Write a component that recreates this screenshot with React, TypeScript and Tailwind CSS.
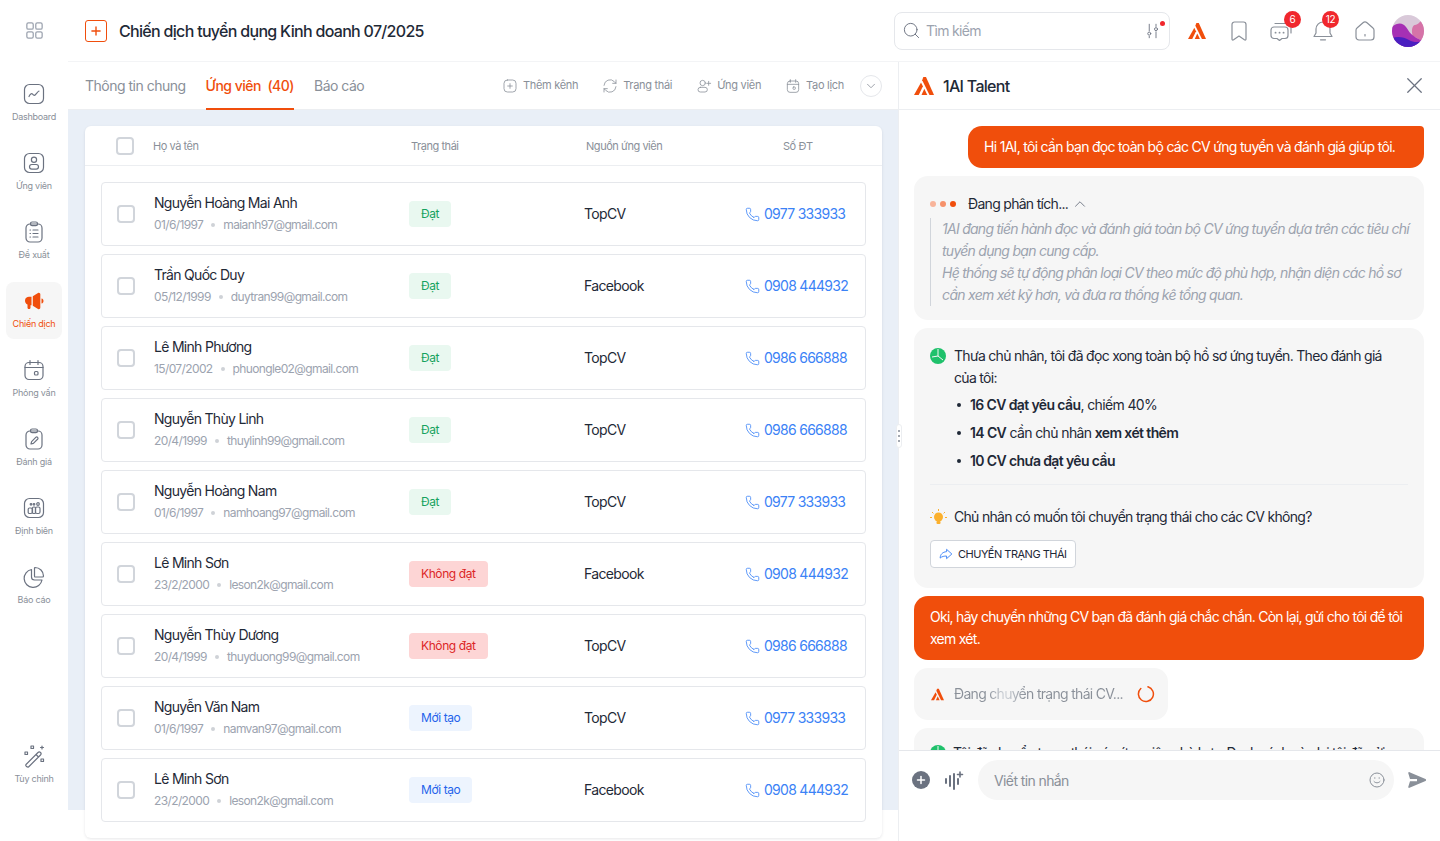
import { ChevronDown, ChevronUp, Phone, Plus, Search, X } from "lucide-react";
import type { ReactNode } from "react";

const font = { fontFamily: "Inter, 'Noto Sans', sans-serif" };

const Logo = ({ className }: { className: string }) => (
  <svg className={className} viewBox="0 0 20 20" fill="#f04e0c">
    <path d="M9.300 1h2.700l8 18h-4.500L8.200 4.300z" />
    <path d="M7 6.500 8.900 10.200 4.700 19H0z" />
    <path d="M10.300 12.800 13.300 19H7.500z" />
  </svg>
);

const Icon = ({ children, className = "h-6 w-6" }: { children: ReactNode; className?: string }) => (
  <svg className={className} viewBox="0 0 24 24" fill="none" stroke="currentColor" strokeWidth="1.2" strokeLinecap="round" strokeLinejoin="round">
    {children}
  </svg>
);

const navItems: { label: string; active?: boolean; icon: ReactNode }[] = [
  {
    label: "Dashboard",
    icon: (
      <>
        <rect x="2.500" y="2.500" width="19" height="19" rx="5" />
        <path d="M7 14.500c1.200-2.500 2.500-3.600 3.600-2.400s1.700 1.800 3 .4 2.400-3.300 3.400-3.500" />
      </>
    ),
  },
  {
    label: "Ứng viên",
    icon: (
      <>
        <rect x="2.500" y="2.500" width="19" height="19" rx="5" />
        <circle cx="12" cy="8.800" r="2.600" />
        <rect x="7.500" y="13.500" width="9" height="4.600" rx="2.300" />
      </>
    ),
  },
  {
    label: "Đề xuất",
    icon: (
      <>
        <rect x="4" y="4" width="16" height="18" rx="4" />
        <rect x="8.500" y="2" width="7" height="3.600" rx="1.600" />
        <path d="M8 10h.5M11 10h5M8 13.500h.5M11 13.500h5M8 17h.5M11 17h5" />
      </>
    ),
  },
  {
    label: "Chiến dịch",
    active: true,
    icon: (
      <>
        <path d="M3 11.500C3 9 5 7.800 7 7.800h2.500v8.400h-1v2.600c0 1.600-3 1.600-3 0v-3.200C4 15 3 13.500 3 11.500z" fill="#f04e0c" stroke="none" />
        <path d="M10.800 7.300 16 4c1.200-.6 2.300.2 2.300 1.500v13c0 1.300-1.100 2.100-2.300 1.500l-5.200-3.300z" fill="#f04e0c" stroke="none" />
        <path d="M19.500 9.500c1.500.3 2 1.400 2 2.500s-.5 2.200-2 2.500z" fill="#f04e0c" stroke="none" />
      </>
    ),
  },
  {
    label: "Phỏng vấn",
    icon: (
      <>
        <rect x="3" y="4.500" width="18" height="17" rx="4" />
        <path d="M3 9.500h18M8 2.500v4M16 2.500v4" />
        <rect x="12.500" y="13.500" width="3.500" height="3.500" rx="1" />
      </>
    ),
  },
  {
    label: "Đánh giá",
    icon: (
      <>
        <rect x="4" y="4" width="16" height="18" rx="4" />
        <rect x="8.500" y="2" width="7" height="3.600" rx="1.600" />
        <path d="m9 17 .6-2.400 4.400-4.400a1.300 1.300 0 0 1 1.800 1.800l-4.400 4.400z" />
      </>
    ),
  },
  {
    label: "Định biên",
    icon: (
      <>
        <rect x="2.500" y="2.500" width="19" height="19" rx="5" />
        <circle cx="9" cy="8.300" r=".8" />
        <circle cx="12" cy="8.300" r=".8" />
        <circle cx="16" cy="8" r="1.300" />
        <rect x="6.200" y="12" width="4" height="5.500" rx="1.200" />
        <rect x="10.500" y="11" width="3" height="6.500" rx="1" />
        <rect x="13.500" y="11" width="4.500" height="6.500" rx="1.500" />
      </>
    ),
  },
  {
    label: "Báo cáo",
    icon: (
      <>
        <path d="M9.500 4.500A9 9 0 1 0 20 15h-7.500a3 3 0 0 1-3-3z" />
        <path d="M13 2.500a8.500 8.500 0 0 1 8.500 8.500c0 .8-.5 1-1 1H13c-.5 0-.5-.3-.5-1V3c0-.3.2-.5.5-.5z" />
      </>
    ),
  },
];

const candidates = [
  { name: "Nguyễn Hoàng Mai Anh", dob: "01/6/1997", email: "maianh97@gmail.com", status: "Đạt", source: "TopCV", phone: "0977 333933" },
  { name: "Trần Quốc Duy", dob: "05/12/1999", email: "duytran99@gmail.com", status: "Đạt", source: "Facebook", phone: "0908 444932" },
  { name: "Lê Minh Phương", dob: "15/07/2002", email: "phuongle02@gmail.com", status: "Đạt", source: "TopCV", phone: "0986 666888" },
  { name: "Nguyễn Thùy Linh", dob: "20/4/1999", email: "thuylinh99@gmail.com", status: "Đạt", source: "TopCV", phone: "0986 666888" },
  { name: "Nguyễn Hoàng Nam", dob: "01/6/1997", email: "namhoang97@gmail.com", status: "Đạt", source: "TopCV", phone: "0977 333933" },
  { name: "Lê Minh Sơn", dob: "23/2/2000", email: "leson2k@gmail.com", status: "Không đạt", source: "Facebook", phone: "0908 444932" },
  { name: "Nguyễn Thùy Dương", dob: "20/4/1999", email: "thuyduong99@gmail.com", status: "Không đạt", source: "TopCV", phone: "0986 666888" },
  { name: "Nguyễn Văn Nam", dob: "01/6/1997", email: "namvan97@gmail.com", status: "Mới tạo", source: "TopCV", phone: "0977 333933" },
  { name: "Lê Minh Sơn", dob: "23/2/2000", email: "leson2k@gmail.com", status: "Mới tạo", source: "Facebook", phone: "0908 444932" },
];

const statusClass = (status: string) => {
  if (status === "Đạt") return "bg-[#e9f8f0] text-[#16a35f]";
  if (status === "Không đạt") return "bg-[#fdd5d5] text-[#dc2626]";
  return "bg-[#edf4fe] text-[#2563eb]";
};

const actions: { label: string; icon: ReactNode }[] = [
  {
    label: "Thêm kênh",
    icon: (
      <>
        <rect x="3" y="3" width="18" height="18" rx="5" />
        <path d="M12 8.500v7M8.500 12h7" />
      </>
    ),
  },
  {
    label: "Trạng thái",
    icon: <path d="M3 11a9 9 0 0 1 15.500-5.500L21 8M21 3v5h-5M21 13a9 9 0 0 1-15.500 5.500L3 16M3 21v-5h5" />,
  },
  {
    label: "Ứng viên",
    icon: (
      <>
        <circle cx="10" cy="7.500" r="4" />
        <rect x="3" y="14" width="14" height="7" rx="3.500" />
        <path d="M19 5v6M16 8h6" />
      </>
    ),
  },
  {
    label: "Tạo lịch",
    icon: (
      <>
        <rect x="3.500" y="4.500" width="17" height="17" rx="4" />
        <path d="M3.500 9.500h17M8 2.500v4M16 2.500v4" />
        <rect x="12" y="13.500" width="3.500" height="3.500" rx="1" />
      </>
    ),
  },
];

const CheckBox = () => <span className="block h-[18px] w-[18px] shrink-0 rounded-[4px] border-2 border-[#d1d5db] bg-white" />;

const PieDone = () => (
  <svg className="h-4 w-4 shrink-0" viewBox="0 0 16 16">
    <circle cx="8" cy="8" r="8" fill="#1fc16b" />
    <path d="M8 1v7l5 4M8 8l-6 1" stroke="#f6f6f6" strokeWidth="1" fill="none" />
  </svg>
);

export default function App() {
  return (
    <div className="flex h-[841px] w-[1440px] overflow-hidden bg-white text-[14px] text-[#1f2937]" style={font}>
      <aside className="flex w-[68px] shrink-0 flex-col items-center pb-[47px] pt-[22px]">
        <div className="mb-[36px] text-[#9ca3af]">
          <svg className="h-[17px] w-[17px]" viewBox="0 0 20 20" fill="none" stroke="currentColor" strokeWidth="1.500">
            <rect x="1" y="1" width="7.500" height="7.500" rx="1.800" />
            <rect x="11.500" y="1" width="7.500" height="7.500" rx="1.800" />
            <rect x="1" y="11.500" width="7.500" height="7.500" rx="1.800" />
            <rect x="11.500" y="11.500" width="7.500" height="7.500" rx="1.800" />
          </svg>
        </div>
        <nav className="flex flex-col gap-3">
          {navItems.map((item) => (
            <div
              key={item.label}
              className={`flex h-[57px] w-[56px] flex-col items-center gap-[5px] rounded-lg pt-[7px] ${item.active ? "bg-[#f6f6f6] text-[#f04e0c]" : "text-[#6b7280]"}`}
            >
              <Icon>{item.icon}</Icon>
              <span className={`text-[9px] leading-[12px] tracking-[-0.25px] ${item.active ? "" : "text-[#8a9099]"}`}>{item.label}</span>
            </div>
          ))}
        </nav>
        <div className="mt-auto flex h-[57px] w-[56px] flex-col items-center gap-[5px] pt-[7px] text-[#6b7280]">
          <Icon>
            <path d="m4 20.500 12-12a1.500 1.500 0 0 1 2.500 2.500l-12 12c-1 .5-3.500-1-2.500-2.500zM14 10.500l2.500 2.500" />
            <rect x="9" y="2" width="2.500" height="2.500" />
            <rect x="3" y="8" width="2.500" height="2.500" />
            <rect x="19" y="15" width="2.500" height="2.500" />
            <path d="M20 2v3M18.500 3.500h3" />
          </Icon>
          <span className="text-[9px] leading-[12px] tracking-[-0.25px] text-[#8a9099]">Tùy chỉnh</span>
        </div>
      </aside>

      <div className="flex min-w-0 flex-1 flex-col">
        <header className="flex h-[62px] shrink-0 items-center border-b border-[#f3f4f6] pl-[17px] pr-[16px]">
          <span className="flex h-[22px] w-[22px] items-center justify-center rounded-[3px] border border-[#f04e0c] text-[#f04e0c]">
            <Plus size={14} strokeWidth={2.400} />
          </span>
          <h1 className="ml-3 text-[16px] font-medium tracking-[-0.69px] text-[#1f2a37]">Chiến dịch tuyển dụng Kinh doanh 07/2025</h1>
          <div className="ml-auto flex h-[38px] w-[276px] items-center rounded-lg border border-[#e5e7eb] pl-[7px] pr-[7px] text-[#6b7280]">
            <Search size={19} strokeWidth={1.200} />
            <span className="ml-[5px] text-[14px] tracking-[-0.65px] text-[#9ca3af]">Tìm kiếm</span>
            <span className="relative ml-auto">
              <Icon className="h-[18px] w-[18px]">
                <path d="M7 3v9M7 19v2M16 3v3M16 13v8" />
                <circle cx="7" cy="15.500" r="2" />
                <circle cx="16" cy="9.500" r="2" />
              </Icon>
              <span className="absolute -top-[1px] right-[-3px] h-[5px] w-[5px] rounded-full bg-[#f0272d]" />
            </span>
          </div>
          <div className="ml-[15px] flex items-center gap-[18px] text-[#8a9099]">
            <span className="flex w-6 justify-center">
              <Logo className="h-[18px] w-[18px]" />
            </span>
            <Icon>
              <path d="M7.500 3h9A2.500 2.500 0 0 1 19 5.500V20c0 1-.8 1.300-1.600.8L12 17l-5.400 3.800c-.8.5-1.600.2-1.600-.8V5.500A2.500 2.500 0 0 1 7.500 3z" />
            </Icon>
            <span className="relative">
              <Icon>
                <path d="M5 8h11a3 3 0 0 1 3 3v5.500a3 3 0 0 1-3 3h-3l-2.500 2-2.500-2H5a3 3 0 0 1-3-3V11a3 3 0 0 1 3-3z" />
                <path d="M6 4.500h12a4 4 0 0 1 4 4V14" />
                <path d="M6.500 13.700h.1M10.500 13.700h.1M14.500 13.700h.1" strokeWidth="1.800" />
              </Icon>
              <span className="absolute -top-[8px] left-[15px] flex h-[17px] w-[17px] items-center justify-center rounded-full bg-[#f0272d] text-[10px] text-white">6</span>
            </span>
            <span className="relative">
              <Icon>
                <path d="M12 3a7 7 0 0 0-7 7v4l-2 3.500h18L19 14v-4a7 7 0 0 0-7-7z" />
                <path d="M9.500 20.800h5" />
              </Icon>
              <span className="absolute -top-[8px] left-[11px] flex h-[17px] w-[17px] items-center justify-center rounded-full bg-[#f0272d] text-[10px] tracking-[-0.4px] text-white">12</span>
            </span>
            <Icon>
              <path d="M4 9 10 3.700a3 3 0 0 1 4 0L20 9c.6.5 1 1.300 1 2.200V18a3 3 0 0 1-3 3H6a3 3 0 0 1-3-3v-6.800c0-.9.4-1.700 1-2.200z" />
              <path d="M12 15.500v1.500" />
            </Icon>
            <svg className="-ml-[3px] h-8 w-8" viewBox="0 0 32 32">
              <defs>
                <clipPath id="avatar-clip">
                  <circle cx="16" cy="16" r="16" />
                </clipPath>
              </defs>
              <g clipPath="url(#avatar-clip)">
                <rect width="32" height="32" fill="#d9c9d9" />
                <path d="M32 4c-4 2-6 6-9 6-3 0-4 7-2 11l11 6z" fill="#d673a8" />
                <path d="M0 12c6-5 11-4 14 0s5 10 18 14v6H0z" fill="#a630b4" />
                <path d="M0 23c6-2 12-1 17 2s10 2 15 1v6H0z" fill="#4a1fc0" />
              </g>
            </svg>
          </div>
        </header>

        <div className="flex min-h-0 flex-1">
          <main className="relative w-[830px] shrink-0">
            <div className="flex h-[48px] items-stretch border-b border-[#eceef1] pl-[17px] pr-[16px]">
              <div className="flex items-center gap-5 text-[14px] tracking-[-0.5px] text-[#8a9099]">
                <span>Thông tin chung</span>
                <span className="relative flex h-full items-center font-medium text-[#f04e0c]">
                  Ứng viên&nbsp;&nbsp;(40)
                  <span className="absolute inset-x-0 bottom-[-1px] h-[2px] bg-[#f04e0c]" />
                </span>
                <span>Báo cáo</span>
              </div>
              <div className="ml-auto flex items-center gap-[24px] text-[11px] tracking-[-0.3px] text-[#8a9099]">
                {actions.map((a) => (
                  <span key={a.label} className="flex items-center gap-[5px]">
                    <Icon className="h-[16px] w-[16px]">{a.icon}</Icon>
                    {a.label}
                  </span>
                ))}
                <span className="-ml-[8px] flex h-[22px] w-[22px] items-center justify-center rounded-full border border-[#e5e7eb]">
                  <ChevronDown size={14} strokeWidth={1.400} />
                </span>
              </div>
            </div>

            <div className="h-[700px] bg-[#e9eff7] pl-[17px] pr-4 pt-4">
              <section className="h-[712px] rounded-md bg-white shadow-[0_1px_3px_rgba(15,23,42,0.1)]">
                <div className="flex h-[40px] items-center border-b border-[#eceef1] pt-[1px] text-[11px] tracking-[-0.45px] text-[#8a9099]">
                  <span className="ml-[31px]">
                    <CheckBox />
                  </span>
                  <span className="ml-[19px] w-[258px]">Họ và tên</span>
                  <span className="w-[175px]">Trạng thái</span>
                  <span className="w-[197px]">Nguồn ứng viên</span>
                  <span>Số ĐT</span>
                </div>
                <div className="flex flex-col gap-2 px-4 pt-4">
                  {candidates.map((c, i) => (
                    <div key={i} className="flex h-[64px] items-center rounded-[4px] border border-[#e5e7eb] bg-white pl-[15px]">
                      <CheckBox />
                      <div className="-mt-[2px] ml-[19px] w-[255px]">
                        <div className="text-[14px] leading-[20px] tracking-[-0.7px] text-[#1f2937]">{c.name}</div>
                        <div className="mt-[3px] flex items-center text-[12px] leading-[18px] tracking-[-0.62px] text-[#9ca3af]">
                          {c.dob}
                          <span className="mx-[8px] h-[4px] w-[4px] rounded-full bg-[#cfd2d7]" />
                          {c.email}
                        </div>
                      </div>
                      <div className="w-[175px]">
                        <span className={`inline-flex h-[26px] items-center rounded-[4px] px-3 text-[12px] tracking-[-0.4px] ${statusClass(c.status)}`}>{c.status}</span>
                      </div>
                      <div className="-mt-[2px] w-[161px] text-[14px] tracking-[-0.65px] text-[#1f2937]">{c.source}</div>
                      <div className="flex items-center gap-[4px] text-[14px] tracking-[-0.72px] text-[#3b82f6]">
                        <Phone size={15} strokeWidth={1.300} />
                        <span className="-mt-[2px]">{c.phone}</span>
                      </div>
                    </div>
                  ))}
                </div>
              </section>
            </div>
          </main>

          <aside className="relative flex w-[542px] shrink-0 flex-col border-l border-[#eceef1] bg-white">
            <span className="absolute left-[-3px] top-[362px] flex h-[24px] w-[6px] flex-col items-center justify-center gap-[3px] rounded-full border border-[#eceef1] bg-white">
              <span className="h-[2px] w-[2px] bg-[#a3a8b0]" />
              <span className="h-[2px] w-[2px] bg-[#a3a8b0]" />
              <span className="h-[2px] w-[2px] bg-[#a3a8b0]" />
            </span>
            <div className="flex h-[48px] shrink-0 items-center border-b border-[#eceef1] pl-[15px] pr-[12px]">
              <Logo className="h-[20px] w-[20px]" />
              <span className="ml-[9px] text-[16px] font-medium tracking-[-0.7px] text-[#1f2a37]">1AI Talent</span>
              <X className="ml-auto text-[#6b7280]" size={27} strokeWidth={1.100} />
            </div>

            <div className="flex h-[640px] shrink-0 flex-col gap-2 overflow-hidden pl-[15px] pr-[16px] pt-4 text-[14px] tracking-[-0.7px]">
              <div className="ml-auto flex h-[42px] w-[456px] shrink-0 items-center rounded-[14px] rounded-tr-[4px] bg-[#f04e0c] px-4 pb-[2px] text-white">
                Hi 1AI, tôi cần bạn đọc toàn bộ các CV ứng tuyển và đánh giá giúp tôi.
              </div>

              <div className="h-[144px] shrink-0 rounded-[14px] bg-[#f6f6f6] pl-4 pr-[13px] pt-[17px]">
                <div className="flex h-[22px] items-center">
                  <span className="h-[6px] w-[6px] rounded-full bg-[#f8b49a]" />
                  <span className="ml-[4px] h-[6px] w-[6px] rounded-full bg-[#f6916a]" />
                  <span className="ml-[4px] h-[6px] w-[6px] rounded-full bg-[#f04e0c]" />
                  <span className="-mt-[2px] ml-[12px]">Đang phân tích...</span>
                  <ChevronUp className="ml-[3px] text-[#6b7280]" size={18} strokeWidth={1.200} />
                </div>
                <div className="mt-[3px] border-l border-[#d1d5db] pl-[11px] text-[14px] italic leading-[22px] tracking-[-0.73px] text-[#9ca3af]">
                  1AI đang tiến hành đọc và đánh giá toàn bộ CV ứng tuyển dựa trên các tiêu chí tuyển dụng bạn cung cấp.
                  <br />
                  Hệ thống sẽ tự động phân loại CV theo mức độ phù hợp, nhận diện các hồ sơ cần xem xét kỹ hơn, và đưa ra thống kê tổng quan.
                </div>
              </div>

              <div className="h-[260px] shrink-0 rounded-[14px] bg-[#f6f6f6] px-4 pt-[17px]">
                <div className="flex gap-[8px] pr-[16px] leading-[22px]">
                  <span className="mt-[3px]">
                    <PieDone />
                  </span>
                  <p>Thưa chủ nhân, tôi đã đọc xong toàn bộ hồ sơ ứng tuyển. Theo đánh giá của tôi:</p>
                </div>
                <ul className="ml-[24px] mt-[2px] list-none leading-[28px] tracking-[-0.62px]">
                  {[
                    <><b className="font-semibold">16 CV đạt yêu cầu</b>, chiếm 40%</>,
                    <><b className="font-semibold">14 CV</b> cần chủ nhân <b className="font-semibold">xem xét thêm</b></>,
                    <b className="font-semibold">10 CV chưa đạt yêu cầu</b>,
                  ].map((line, i) => (
                    <li key={i} className="relative pl-[16px]">
                      <span className="absolute left-[3px] top-[12px] h-[4px] w-[4px] rounded-full bg-[#1f2937]" />
                      {line}
                    </li>
                  ))}
                </ul>
                <div className="mt-[9px] border-t border-[#eceef1]" />
                <div className="mt-[21px] flex items-center gap-[7px] leading-[22px]">
                  <svg className="h-[17px] w-[17px] shrink-0" viewBox="0 0 17 17" fill="#fbb02d">
                    <circle cx="8.500" cy="8" r="4.500" />
                    <rect x="6.500" y="12" width="4" height="3" rx="1" />
                    <path d="M8.500 0v2M2 3l1.400 1.400M15 3l-1.400 1.400M0 8.500h2M15 8.500h2" stroke="#fbb02d" strokeWidth="1" />
                  </svg>
                  Chủ nhân có muốn tôi chuyển trạng thái cho các CV không?
                </div>
                <div className="mt-[12px] inline-flex h-[28px] items-center gap-[5px] rounded-[4px] border border-[#d1d5db] bg-white pl-[8px] pr-[8px] text-[11px] tracking-[-0.5px]">
                  <svg className="h-[14px] w-[14px] text-[#3b82f6]" viewBox="0 0 24 24" fill="none" stroke="currentColor" strokeWidth="1.600" strokeLinejoin="round">
                    <path d="M13 4 22 12l-9 8v-4.500c-4 0-8 .5-11 3.500 0-6 4-10.500 11-11z" />
                  </svg>
                  CHUYỂN TRẠNG THÁI
                </div>
              </div>

              <div className="flex h-[64px] shrink-0 items-center rounded-[14px] rounded-tr-[4px] bg-[#f04e0c] px-4 leading-[22px] tracking-[-0.73px] text-white">
                Oki, hãy chuyển những CV bạn đã đánh giá chắc chắn. Còn lại, gửi cho tôi để tôi xem xét.
              </div>

              <div className="flex h-[52px] w-[254px] shrink-0 items-center rounded-[14px] bg-[#f6f6f6] pl-[17px] text-[#8a9099]">
                <Logo className="h-[13px] w-[13px]" />
                <span className="-mt-[2px] ml-[10px] whitespace-nowrap bg-[linear-gradient(90deg,#8a9099_0%,#8a9099_20%,#d1d5db_30%,#8a9099_42%)] bg-clip-text text-transparent">
                  Đang chuyển trạng thái CV...
                </span>
                <svg className="ml-[14px] h-[18px] w-[18px] shrink-0" viewBox="0 0 18 18" fill="none" stroke="#f04e0c" strokeWidth="1.500" strokeLinecap="round">
                  <path d="M11 1.800A7.500 7.500 0 1 1 3.800 3.500" />
                </svg>
              </div>

              <div className="flex h-[120px] shrink-0 rounded-[14px] bg-[#f6f6f6] px-4 pt-[14px] leading-[22px] tracking-[-0.87px]">
                <span className="mt-[3px]">
                  <PieDone />
                </span>
                <p className="ml-[7px]">Tôi đã chuyển trạng thái các ứng viên phù hợp. Danh sách còn lại tôi đã gửi</p>
              </div>
            </div>

            <div className="flex h-[91px] shrink-0 items-start border-t border-[#e5e7eb] bg-white pl-[13px] pt-[9px]">
              <div className="flex h-[40px] items-center gap-[14px]">
                <span className="flex h-[18px] w-[18px] items-center justify-center rounded-full bg-[#6b7280] text-white">
                  <Plus size={12} strokeWidth={3} />
                </span>
                <svg className="h-[20px] w-[20px] text-[#6b7280]" viewBox="0 0 20 20" fill="none" stroke="currentColor" strokeWidth="2" strokeLinecap="round">
                  <path d="M2 9v4M6 6v10M10 4v15M14 9v5" />
                  <path d="M16 2v5M13.500 4.500h5" strokeWidth="1.600" />
                </svg>
              </div>
              <div className="ml-[14px] flex h-[40px] w-[416px] items-center rounded-full bg-[#f6f6f6] pl-4 pr-[9px] tracking-[-0.6px] text-[#8a9099]">
                Viết tin nhắn
                <svg className="ml-auto h-[16px] w-[16px]" viewBox="0 0 16 16" fill="none" stroke="currentColor" strokeWidth="1" strokeLinecap="round">
                  <circle cx="8" cy="8" r="7" />
                  <path d="M5 9.500c1.500 1.800 4.500 1.800 6 0M5.500 6h.5M10 6h.5" />
                </svg>
              </div>
              <svg className="ml-[14px] mt-[11px] h-[18px] w-[18px] text-[#8a9099]" viewBox="0 0 18 18" fill="currentColor">
                <path d="M1.500 1.200 17.500 8c.8.4.8 1.500 0 1.900L1.500 16.800c-.8.3-1.400-.3-1.200-1.100L2 10.200h7V8H2L.3 2.300C.1 1.500.7.900 1.500 1.200z" />
              </svg>
            </div>
          </aside>
        </div>
      </div>
    </div>
  );
}
